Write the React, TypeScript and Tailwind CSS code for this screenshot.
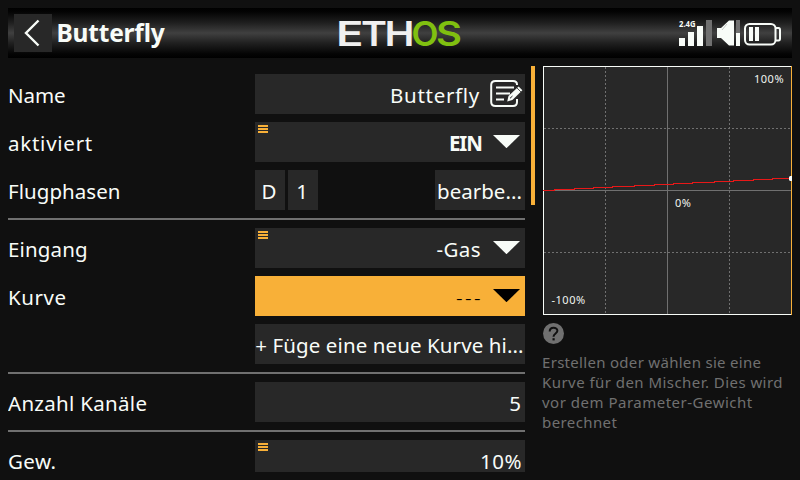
import type { ReactNode } from "react";

function MenuMark() {
  return (
    <svg className="absolute left-[3px] top-[3px]" width="10" height="8" viewBox="0 0 10 8" fill="#f8b038" shapeRendering="crispEdges">
      <rect width="10" height="2" />
      <rect y="3" width="10" height="2" />
      <rect y="6" width="10" height="2" />
    </svg>
  );
}

function Caret({ color = "#f8fcf8" }: { color?: string }) {
  return (
    <svg className="ml-[12px] mr-[5px] mt-[13px] shrink-0" width="27" height="13" viewBox="0 0 27 13">
      <path d="M0 0H27L13.5 13.2Z" fill={color} />
    </svg>
  );
}

function EditIcon() {
  return (
    <svg className="ml-[10px] mr-[2px] mt-[6px] shrink-0" width="33" height="28" viewBox="0 0 33 28" fill="none" stroke="#f8fcf8" strokeWidth="2">
      <path d="M27 5V4.500Q27 1 23 1H5.500Q1.200 1 1.200 5V22Q1.200 26 5.500 26H23Q27 26 27 22V19" />
      <path d="M6 7.500H24M6 13.500H20M6 19.500H14" />
      <path d="M17.200 21.400L18.500 16L28.600 6.400L32.400 10.200L22.400 20Z" fill="#f8fcf8" stroke="none" />
      <path d="M27 8L31 12" stroke="#282828" strokeWidth="0.800" />
      <path d="M20 18.300L22.500 16" stroke="#282828" strokeWidth="1" />
    </svg>
  );
}

function Row({ label, tracking = "", short = false, children }: { label?: string; tracking?: string; short?: boolean; children: ReactNode }) {
  return (
    <div className={`flex shrink-0 ${short ? "h-8" : "h-10"}`}>
      <div className={`w-[247px] shrink-0 pt-[6px] ${tracking}`}>{label}</div>
      {children}
    </div>
  );
}

function Field({ mark = false, active = false, children }: { mark?: boolean; active?: boolean; children: ReactNode }) {
  return (
    <div className={`relative flex w-[270px] justify-end ${active ? "bg-[#f8b038] text-black" : "bg-[#282828]"}`}>
      {mark && <MenuMark />}
      {children}
    </div>
  );
}

function Divider() {
  return <div className="h-[2px] shrink-0 bg-[#707070]" />;
}

function Logo() {
  return (
    <svg className="absolute left-[328px] top-0" width="130" height="50" viewBox="336 8 130 50" fontFamily="Inter, sans-serif" fontSize="34.500" fontWeight="600">
      <g fill="#f0f0f0">
        <text x="336" y="46" textLength="27.500" lengthAdjust="spacingAndGlyphs">E</text>
        <text x="361" y="46" textLength="26" lengthAdjust="spacingAndGlyphs">T</text>
        <text x="384.500" y="46" textLength="30" lengthAdjust="spacingAndGlyphs">H</text>
      </g>
      <g fill="#80c010">
        <text x="411.500" y="46" textLength="27" lengthAdjust="spacingAndGlyphs">O</text>
        <text x="436" y="46" textLength="26" lengthAdjust="spacingAndGlyphs">S</text>
      </g>
    </svg>
  );
}

function StatusIcons() {
  return (
    <svg className="ml-auto mr-[10px]" width="106" height="50" viewBox="676 8 106 50">
      <text x="679" y="26.500" fill="#f8fcf8" fontFamily="Noto Sans, sans-serif" fontWeight="700" fontSize="8" textLength="16.500" lengthAdjust="spacingAndGlyphs">2.4G</text>
      <g shapeRendering="crispEdges" fill="#f8fcf8">
        <rect x="679" y="38" width="6" height="8" />
        <rect x="688" y="32" width="6" height="14" />
        <rect x="697" y="26" width="6" height="20" />
        <rect x="706" y="20" width="6" height="26" fill="#707070" />
        <rect x="736" y="20" width="4" height="13" fill="#707070" />
        <rect x="736" y="33" width="4" height="13" />
        <rect x="749" y="27" width="4" height="14" />
        <rect x="755" y="27" width="4" height="14" />
      </g>
      <path d="M717 28H721L729 20.500H734V45.500H729L721 38H717Z" fill="#f8fcf8" />
      <path d="M722 30L727 24" stroke="#b0b4b0" strokeWidth="0.700" />
      <g fill="none" stroke="#f8fcf8" strokeWidth="2">
        <rect x="745" y="24" width="30.500" height="20.500" rx="4.500" />
        <path d="M775.500 28H778.500Q780 28 780 30V38.500Q780 40.500 778.500 40.500H775.500" />
      </g>
    </svg>
  );
}

function Chart() {
  const steps = [554, 574, 593, 612, 634, 654, 673, 692, 714, 733, 753, 772, 791];
  const d = "M543 190.500" + steps.map((x, i) => `H${x}` + (i < steps.length - 1 ? "v-1" : "")).join("");
  return (
    <svg className="block shrink-0" width="250" height="249" viewBox="543 66 250 249">
      <rect x="543" y="66" width="249" height="249" fill="#282828" />
      <g stroke="#707070" shapeRendering="crispEdges">
        <path d="M667.500 67V314M544 190.500H791" />
        <path d="M605.500 67V314M729.500 67V314M544 128.500H791M544 252.500H791" strokeDasharray="2 2" />
      </g>
      <path d="M792 66.500H543.500V314.500H792" fill="none" stroke="#f8fcf8" shapeRendering="crispEdges" />
      <path d="M791.500 66V315" stroke="#f8b038" shapeRendering="crispEdges" />
      <path d={d} fill="none" stroke="#e81818" shapeRendering="crispEdges" />
      <path d="M790 176H792V181H790L789 180V177Z" fill="#f8fcf8" />
      <g fill="#f0f4f0" fontFamily="Noto Sans, sans-serif" fontSize="11" letterSpacing="0.500">
        <text x="754" y="83">100%</text>
        <text x="675" y="207">0%</text>
        <text x="551.500" y="304">-100%</text>
      </g>
    </svg>
  );
}

export default function App() {
  return (
    <div className="flex h-[480px] w-[800px] flex-col overflow-hidden bg-[#101010] p-2 font-['Noto_Sans',sans-serif] text-[20.5px] leading-[30px] text-[#f8fcf8]">
      <header className="relative flex h-[50px] shrink-0 bg-[linear-gradient(#000_0%,#040404_8%,#202020_30%,#404040_50%,#202020_70%,#040404_92%,#000_100%)]">
        <button className="ml-[6px] mt-[6px] h-[38px] w-[38px] bg-[#282828]">
          <svg width="38" height="38" viewBox="0 0 38 38" fill="none" stroke="#f8fcf8" strokeWidth="2.400">
            <path d="M24.500 6.500L12 19L24.500 31.500" />
          </svg>
        </button>
        <h1 className="ml-[4.5px] mt-[9px] whitespace-nowrap text-[24.5px] font-bold leading-[32px] tracking-[-0.2px]">Butterfly</h1>
        <Logo />
        <StatusIcons />
      </header>
      <main className="mt-2 flex h-[406px] shrink-0 whitespace-nowrap">
        <section className="flex w-[517px] shrink-0 flex-col gap-2 overflow-hidden pt-2">
          <Row label="Name" tracking="tracking-[-0.1px]">
            <Field>
              <span className="pt-[6px] tracking-[0.7px]">Butterfly</span>
              <EditIcon />
            </Field>
          </Row>
          <Row label="aktiviert" tracking="tracking-[0.75px]">
            <Field mark>
              <span className="-mr-[1px] pt-[6px] font-bold tracking-[-1px]">EIN</span>
              <Caret />
            </Field>
          </Row>
          <Row label="Flugphasen" tracking="tracking-[0.05px]">
            <div className="mr-[3px] w-[30px] bg-[#282828] pr-[2px] pt-[6px] text-center">D</div>
            <div className="w-[30px] bg-[#282828] pr-[2px] pt-[6px] text-center">1</div>
            <div className="ml-auto w-[90px] bg-[#282828] pr-[1px] pt-[6px] text-center">bearbe...</div>
          </Row>
          <Divider />
          <Row label="Eingang" tracking="tracking-[0.15px]">
            <Field mark>
              <span className="pt-[6px] tracking-[0.4px]">-Gas</span>
              <Caret />
            </Field>
          </Row>
          <Row label="Kurve" tracking="tracking-[0.55px]">
            <Field active>
              <span className="-mr-[2px] pt-[6px] font-light tracking-[2.4px]">---</span>
              <Caret color="#000000" />
            </Field>
          </Row>
          <Row>
            <div className="w-[270px] bg-[#282828] pr-[1px] pt-[6px] text-center tracking-[0.1px]">+ Füge eine neue Kurve hi...</div>
          </Row>
          <Divider />
          <Row label="Anzahl Kanäle" tracking="tracking-[0.3px]">
            <Field>
              <span className="pr-[4px] pt-[6px]">5</span>
            </Field>
          </Row>
          <Divider />
          <Row label="Gew." tracking="tracking-[0.4px]" short>
            <Field mark>
              <span className="pr-[3px] pt-[6px] tracking-[0.5px]">10%</span>
            </Field>
          </Row>
        </section>
        <div className="ml-[6px] h-[139px] w-[4px] shrink-0 bg-[#f8b038]" />
        <aside className="ml-[8px] w-[250px] shrink-0">
          <Chart />
          <svg className="mt-[8px] block" width="22" height="22" viewBox="0 0 22 22">
            <circle cx="10.500" cy="10.500" r="10.500" fill="#707070" />
            <path d="M6.700 8.500C6.700 3.500 14.400 3.700 14.400 7.800C14.400 10.500 10.500 10.500 10.500 13.800" fill="none" stroke="#101010" strokeWidth="2" />
            <rect x="9.500" y="15.200" width="2.200" height="2.200" fill="#101010" />
          </svg>
          <p className="-ml-px mt-[7px] text-[15px] leading-[20px] text-[#707070]">
            <span className="block tracking-[0.3px]">Erstellen oder wählen sie eine</span>
            <span className="block tracking-[0.45px]">Kurve für den Mischer. Dies wird</span>
            <span className="block tracking-[0.5px]">vor dem Parameter-Gewicht</span>
            <span className="block tracking-[0.4px]">berechnet</span>
          </p>
        </aside>
      </main>
    </div>
  );
}
